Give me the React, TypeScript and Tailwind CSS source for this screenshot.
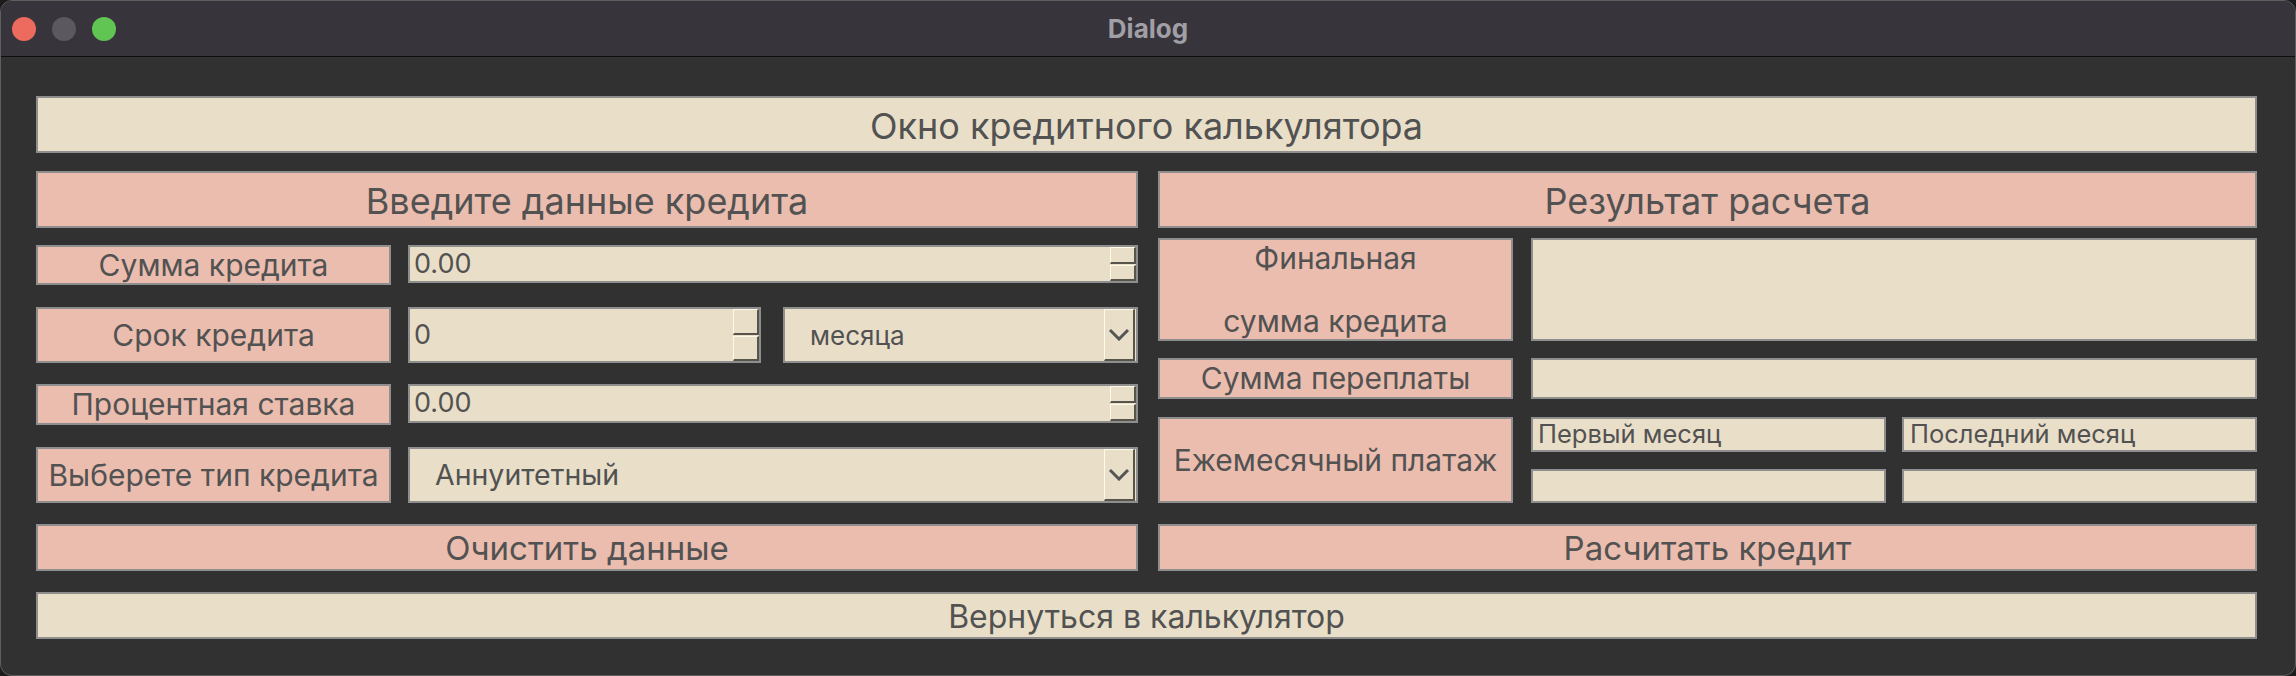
import type { ReactNode } from "react";

const font = { fontFamily: "Inter, 'Noto Sans', sans-serif" };

const Box = ({ className, children }: { className: string; children?: ReactNode }) => (
  <div className={`flex items-center justify-center border-2 border-[#8e8e8e] text-[#525252] ${className}`}>
    {children}
  </div>
);

// Qt-like spin box arrows (two bevelled halves, no glyphs)
const SpinButtons = () => (
  <div className="flex w-[26px] flex-col gap-px self-stretch">
    <div className="flex-1 border-t border-l border-r-2 border-b-2 border-t-[#fffbea] border-l-[#fffbea] border-r-[#57544c] border-b-[#57544c]" />
    <div className="flex-1 border-t border-l border-r-2 border-b-2 border-t-[#fffbea] border-l-[#fffbea] border-r-[#57544c] border-b-[#57544c]" />
  </div>
);

const SpinInput = ({ value, className }: { value: string; className: string }) => (
  <div className={`flex items-stretch border-2 border-[#8e8e8e] bg-[#e9dfc9] text-[#525252] ${className}`}>
    <div className="flex flex-1 items-center pl-[4px] text-[27px]">{value}</div>
    <SpinButtons />
  </div>
);

const Combo = ({ value, className, size }: { value: string; className: string; size: string }) => (
  <div className={`flex items-stretch border-2 border-[#8e8e8e] bg-[#e9dfc9] text-[#525252] ${className}`}>
    <div className={`flex flex-1 items-center pl-[25px] ${size}`}>{value}</div>
    <div className="mr-px flex w-[31px] items-center justify-center border-t border-l border-r-2 border-b-2 border-t-[#fffbea] border-l-[#fffbea] border-r-[#57544c] border-b-[#57544c]">
      <svg width="22" height="13" viewBox="0 0 22 13">
        <polyline points="2,2 11,11 20,2" fill="none" stroke="#555555" strokeWidth="3" />
      </svg>
    </div>
  </div>
);

export default function App() {
  return (
    <div className="h-[676px] w-[2296px] bg-[#1c1c1c]" style={font}>
      <div className="flex h-full flex-col overflow-hidden rounded-[12px] border border-[#5f5f5f] bg-[#313131]">
        {/* title bar */}
        <div className="grid h-[56px] shrink-0 grid-cols-[1fr_auto_1fr] items-center border-b border-[#0d0d0d] bg-[#37343b] px-[11px]">
          <div className="flex gap-[16px]">
            <span className="h-[24px] w-[24px] rounded-full bg-[#ec6a5e]" />
            <span className="h-[24px] w-[24px] rounded-full bg-[#5b585f]" />
            <span className="h-[24px] w-[24px] rounded-full bg-[#61c554]" />
          </div>
          <div className="text-[26px] font-bold text-[#a19fa6]">Dialog</div>
          <div />
        </div>

        <div className="flex flex-col pt-[39px] pl-[35px] pr-[38px]">
          <Box className="h-[57px] bg-[#e9dfc9] pt-[3px] text-[36px]">Окно кредитного калькулятора</Box>

          <div className="mt-[18px] flex gap-[20px]">
            {/* input column */}
            <div className="flex w-[1102px] flex-col">
              <Box className="h-[57px] bg-[#ebbdae] pt-[2px] text-[36px]">Введите данные кредита</Box>

              <div className="mt-[17px] flex items-start gap-[17px]">
                <Box className="h-[40px] w-[355px] bg-[#ebbdae] text-[30px]">Сумма кредита</Box>
                <SpinInput value="0.00" className="h-[38px] flex-1" />
              </div>

              <div className="mt-[22px] flex h-[56px] gap-[17px]">
                <Box className="w-[355px] bg-[#ebbdae] text-[30px]">Срок кредита</Box>
                <SpinInput value="0" className="w-[353px]" />
                <Combo value="месяца" size="text-[26px]" className="ml-[5px] flex-1" />
              </div>

              <div className="mt-[21px] flex items-start gap-[17px]">
                <Box className="h-[41px] w-[355px] bg-[#ebbdae] text-[30px]">Процентная ставка</Box>
                <SpinInput value="0.00" className="h-[39px] flex-1" />
              </div>

              <div className="mt-[22px] flex h-[56px] gap-[17px]">
                <Box className="w-[355px] bg-[#ebbdae] text-[30px]">Выберете тип кредита</Box>
                <Combo value="Аннуитетный" size="text-[28.5px]" className="flex-1" />
              </div>
            </div>

            {/* result column */}
            <div className="flex flex-1 flex-col">
              <Box className="h-[57px] bg-[#ebbdae] pt-[2px] text-[36px]">Результат расчета</Box>

              <div className="mt-[10px] flex h-[103px] gap-[18px]">
                <Box className="w-[355px] flex-col bg-[#ebbdae] text-[30px] leading-[63px]">
                  <span>Финальная</span>
                  <span>сумма кредита</span>
                </Box>
                <Box className="flex-1 bg-[#e9dfc9]" />
              </div>

              <div className="mt-[17px] flex h-[41px] gap-[18px]">
                <Box className="w-[355px] bg-[#ebbdae] text-[30px]">Сумма переплаты</Box>
                <Box className="flex-1 bg-[#e9dfc9]" />
              </div>

              <div className="mt-[18px] flex h-[86px] gap-[18px]">
                <Box className="w-[355px] bg-[#ebbdae] text-[30px]">Ежемесячный платаж</Box>
                <div className="grid flex-1 grid-cols-2 grid-rows-2 gap-x-[16px] gap-y-[17px]">
                  <Box className="justify-start! bg-[#e9dfc9] pl-[5px] text-[25.5px]">Первый месяц</Box>
                  <Box className="justify-start! bg-[#e9dfc9] pl-[6px] text-[25.5px]">Последний месяц</Box>
                  <Box className="bg-[#e9dfc9]" />
                  <Box className="bg-[#e9dfc9]" />
                </div>
              </div>
            </div>
          </div>

          <div className="mt-[21px] flex gap-[20px]">
            <Box className="h-[47px] w-[1102px] bg-[#ebbdae] pt-[2px] text-[33px]">Очистить данные</Box>
            <Box className="h-[47px] flex-1 bg-[#ebbdae] pt-[2px] text-[33px]">Расчитать кредит</Box>
          </div>

          <Box className="mt-[21px] h-[47px] bg-[#e9dfc9] pt-[2px] text-[32px]">Вернуться в калькулятор</Box>
        </div>
      </div>
    </div>
  );
}
